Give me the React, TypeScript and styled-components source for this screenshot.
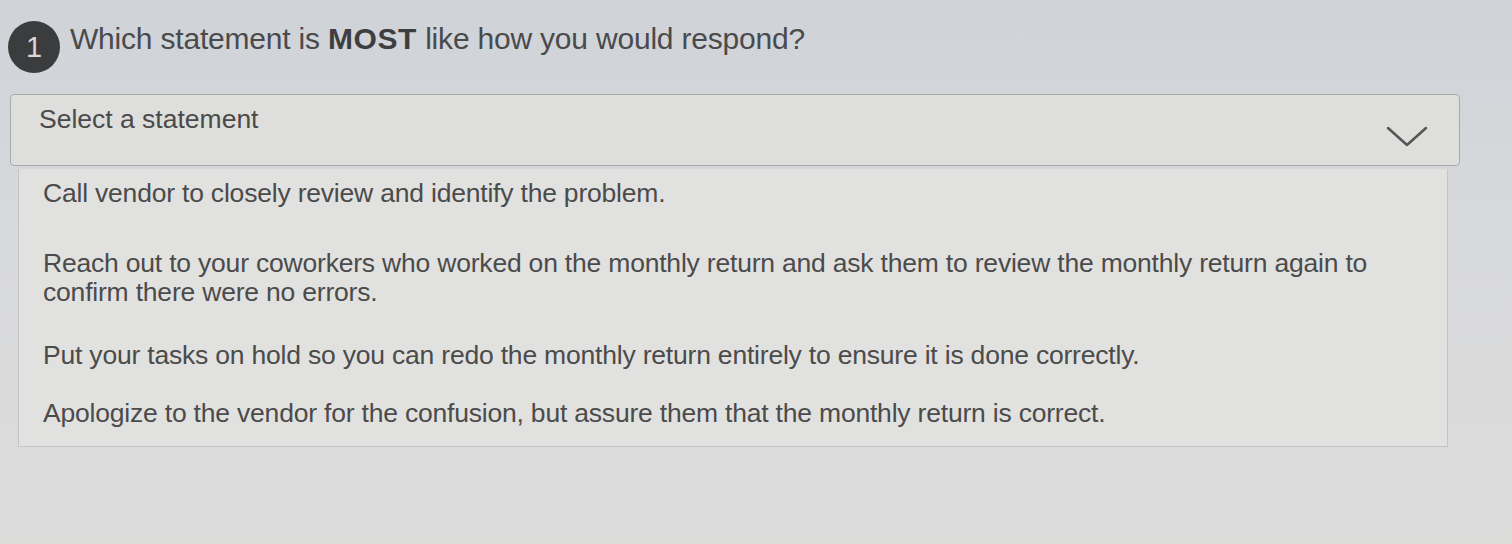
import styled, { createGlobalStyle } from "styled-components";

const GlobalStyle = createGlobalStyle`
  html, body {
    margin: 0;
    padding: 0;
    background: #d6d8db;
  }
  body {
    font-family: "Liberation Sans", Arial, sans-serif;
    color: #474747;
  }
`;

const Page = styled.div`
  width: 1512px;
  height: 544px;
  box-sizing: border-box;
  padding: 16px 52px 0 10px;
  background: linear-gradient(to bottom, #cfd3d8 0%, #d8d9db 45%, #dcdcdb 100%);
  overflow: hidden;
`;

const Question = styled.div`
  display: flex;
  align-items: center;
  gap: 10px;
  height: 58px;
  margin-bottom: 20px;
`;

const Badge = styled.div`
  width: 52px;
  height: 52px;
  border-radius: 50%;
  background: #3b3c3e;
  color: #d8d8d8;
  display: flex;
  align-items: center;
  justify-content: center;
  font-size: 29px;
  flex-shrink: 0;
  margin-top: 4px;
  margin-left: -2px;
`;

const Title = styled.h1`
  margin: 0;
  font-weight: normal;
  font-size: 30px;
  color: #4a4a4c;
  letter-spacing: -0.2px;
  margin-top: -12px;

  b {
    font-weight: bold;
    color: #3e3e40;
    letter-spacing: 0.6px;
  }
`;

const SelectBox = styled.div`
  height: 72px;
  box-sizing: border-box;
  border: 1px solid #a9aaab;
  border-radius: 4px;
  background: #dededc;
  display: flex;
  align-items: center;
  justify-content: space-between;
  padding: 0 30px 0 28px;
  font-size: 26.5px;
  color: #4a4a4a;
`;

const Placeholder = styled.span`
  margin-top: -22px;
`;

const Chevron = styled.svg`
  width: 44px;
  height: 24px;
  margin-top: 14px;
`;

const List = styled.ul`
  list-style: none;
  margin: 3px 12px 0 8px;
  padding: 10px 24px 18px 24px;
  background: #e1e1df;
  border: 1px solid #c4c5c5;
  border-top: none;
`;

const Item = styled.li<{ $gap: number }>`
  font-size: 26.5px;
  line-height: 29px;
  color: #4b4b4b;
  letter-spacing: -0.2px;
  margin-top: ${(p) => p.$gap}px;
`;

const options = [
  { text: "Call vendor to closely review and identify the problem.", gap: 0 },
  {
    text: "Reach out to your coworkers who worked on the monthly return and ask them to review the monthly return again to confirm there were no errors.",
    gap: 41,
  },
  {
    text: "Put your tasks on hold so you can redo the monthly return entirely to ensure it is done correctly.",
    gap: 34,
  },
  {
    text: "Apologize to the vendor for the confusion, but assure them that the monthly return is correct.",
    gap: 29,
  },
];

export default function App() {
  return (
    <>
      <GlobalStyle />
      <Page>
        <Question>
          <Badge>1</Badge>
          <Title>
            Which statement is <b>MOST</b> like how you would respond?
          </Title>
        </Question>
        <SelectBox>
          <Placeholder>Select a statement</Placeholder>
          <Chevron viewBox="0 0 44 24" fill="none">
            <path d="M3 3 L22 20 L41 3" stroke="#555" strokeWidth="2.5" strokeLinecap="round" strokeLinejoin="round" />
          </Chevron>
        </SelectBox>
        <List>
          {options.map((o) => (
            <Item key={o.text} $gap={o.gap}>
              {o.text}
            </Item>
          ))}
        </List>
      </Page>
    </>
  );
}
